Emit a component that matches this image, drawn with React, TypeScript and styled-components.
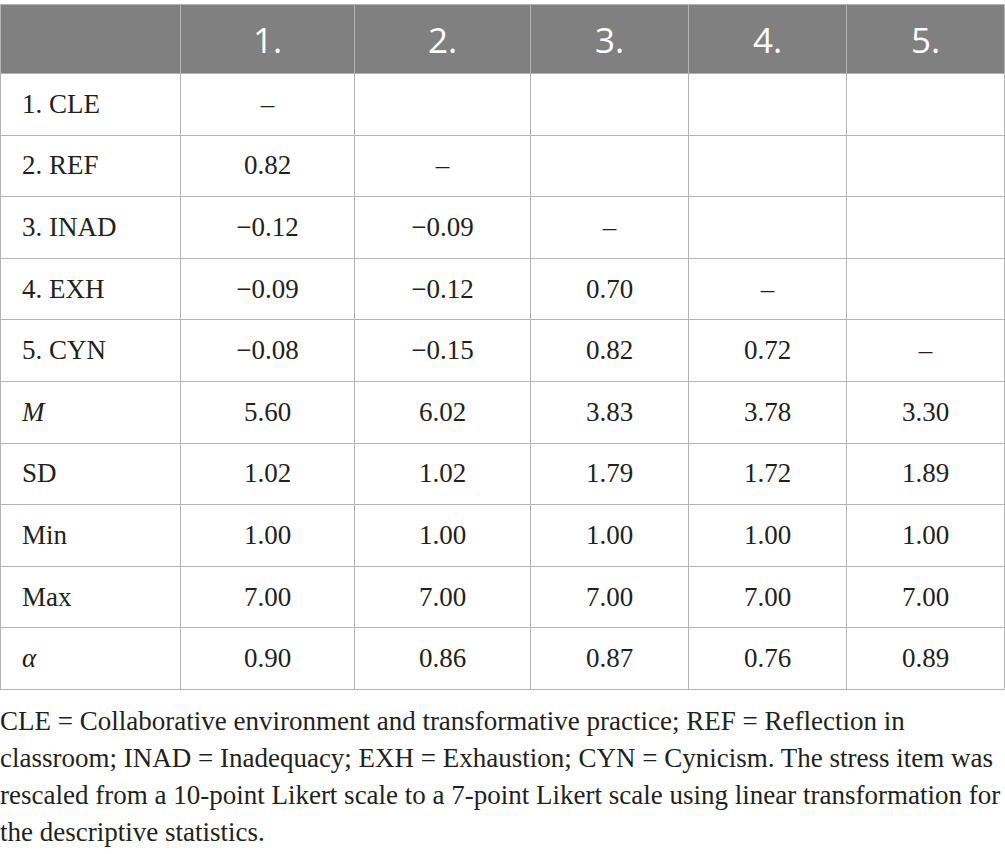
import styled, { createGlobalStyle } from "styled-components";

const GlobalStyle = createGlobalStyle`
	body {
		margin: 0;
		background: #ffffff;
		font-family: "Liberation Serif", "Times New Roman", serif;
		color: #231f20;
	}
`;

const Page = styled.div`
	padding-top: 4px;
	width: 1005px;
`;

const Table = styled.table`
	width: 1004px;
	border-collapse: collapse;
	table-layout: fixed;
`;

const HeadCell = styled.th`
	background: #808080;
	color: #ffffff;
	font-family: "Open Sans", "Liberation Sans", sans-serif;
	font-weight: 400;
	font-size: 35px;
	height: 68px;
	padding: 0;
	text-align: center;
	border: 1px solid #b4b4b4;
`;

const Cell = styled.td<{ $label?: boolean }>`
	height: 60.6px;
	padding: 0 0 0 ${(p) => (p.$label ? "21px" : "0")};
	font-family: "Liberation Serif", "Times New Roman", serif;
	font-size: 27px;
	text-align: ${(p) => (p.$label ? "left" : "center")};
	border: 1px solid #b4b4b4;
	color: #231f20;
`;

const Note = styled.p`
	margin: 13px 0 0;
	font-size: 27px;
	line-height: 37px;
	white-space: nowrap;
	color: #231f20;
`;

const widths = [180, 174, 176, 158, 158, 158];

const rows: { label: React.ReactNode; values: string[] }[] = [
	{ label: "1. CLE", values: ["–", "", "", "", ""] },
	{ label: "2. REF", values: ["0.82", "–", "", "", ""] },
	{ label: "3. INAD", values: ["−0.12", "−0.09", "–", "", ""] },
	{ label: "4. EXH", values: ["−0.09", "−0.12", "0.70", "–", ""] },
	{ label: "5. CYN", values: ["−0.08", "−0.15", "0.82", "0.72", "–"] },
	{ label: <i>M</i>, values: ["5.60", "6.02", "3.83", "3.78", "3.30"] },
	{ label: "SD", values: ["1.02", "1.02", "1.79", "1.72", "1.89"] },
	{ label: "Min", values: ["1.00", "1.00", "1.00", "1.00", "1.00"] },
	{ label: "Max", values: ["7.00", "7.00", "7.00", "7.00", "7.00"] },
	{ label: <i>α</i>, values: ["0.90", "0.86", "0.87", "0.76", "0.89"] },
];

export default function App(): JSX.Element {
	return (
		<Page>
			<GlobalStyle />
			<Table>
				<colgroup>
					{widths.map((w, i) => (
						<col key={i} style={{ width: w }} />
					))}
				</colgroup>
				<thead>
					<tr>
						<HeadCell />
						{["1.", "2.", "3.", "4.", "5."].map((h) => (
							<HeadCell key={h}>{h}</HeadCell>
						))}
					</tr>
				</thead>
				<tbody>
					{rows.map((row, i) => (
						<tr key={i}>
							<Cell $label>{row.label}</Cell>
							{row.values.map((v, j) => (
								<Cell key={j}>{v}</Cell>
							))}
						</tr>
					))}
				</tbody>
			</Table>
			<Note>
				CLE = Collaborative environment and transformative practice; REF
				= Reflection in
				<br />
				classroom; INAD = Inadequacy; EXH = Exhaustion; CYN = Cynicism.
				The stress item was
				<br />
				rescaled from a 10-point Likert scale to a 7-point Likert scale
				using linear transformation for
				<br />
				the descriptive statistics.
			</Note>
		</Page>
	);
}
